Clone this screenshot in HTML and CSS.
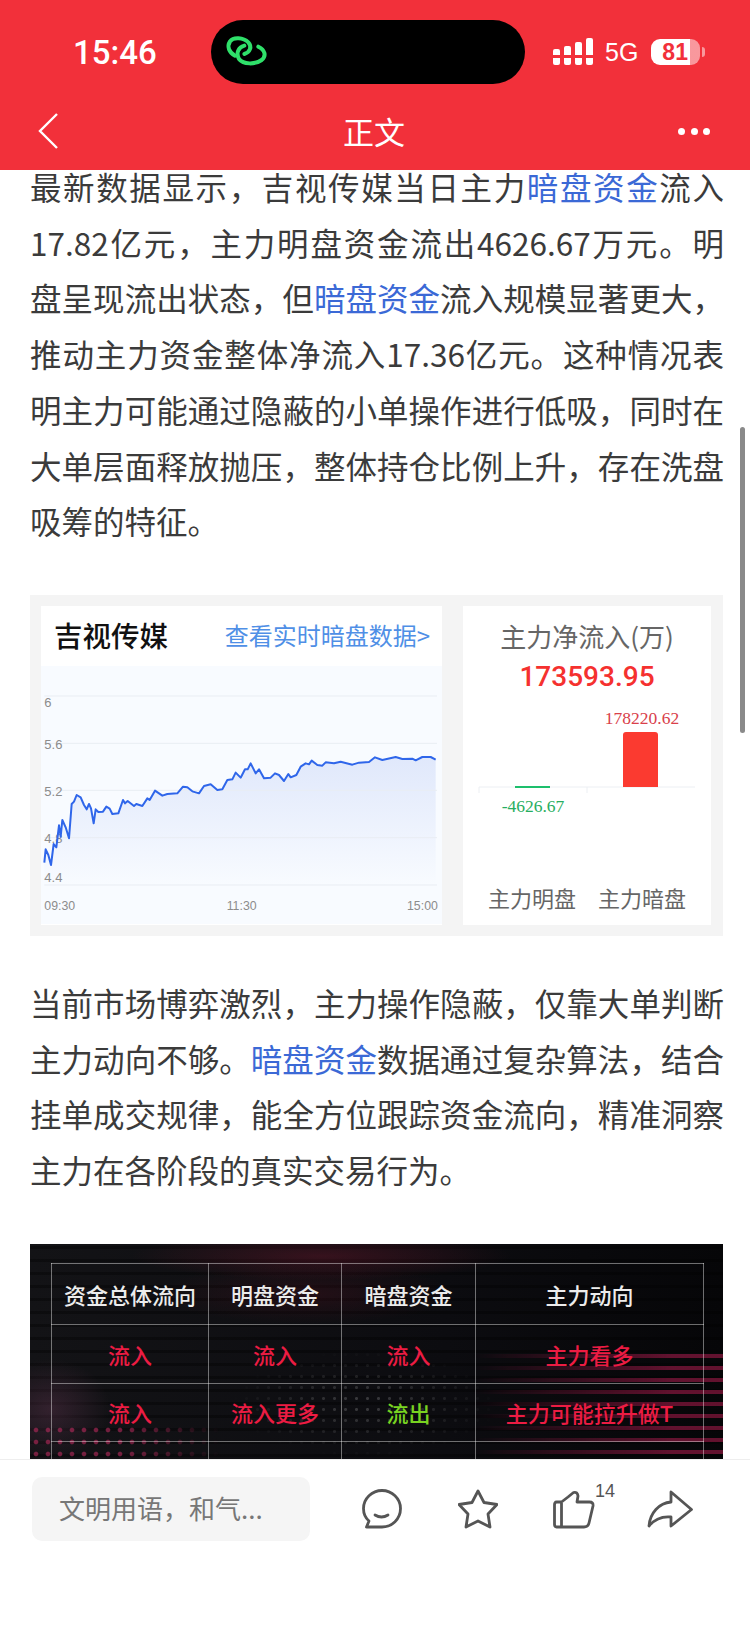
FILE: index.html
```html
<!DOCTYPE html>
<html lang="zh-CN">
<head>
    <meta charset="UTF-8">
    <title>正文</title>
    <link rel="stylesheet" href="styles.css">
</head>
<body>
<div class="page">
    <!--顶部红色区域-->
    <header class="top">
        <div class="status">
            <span class="time">15:46</span>
            <div class="island">
                <svg class="island-logo" width="70" height="55" viewBox="0 0 210 165">
                    <path d="M60 95 C42 85 35 68 45 52 C55 38 85 40 100 55 C112 68 105 85 88 90"/>
                    <path d="M88 65 C70 70 62 87 72 105 C85 122 120 122 140 108 C155 95 150 78 130 68"/>
                </svg>
            </div>
            <div class="signal">
                <i class="s1"></i><i class="s2"></i><i class="s3"></i><i class="s4"></i>
            </div>
            <span class="net">5G</span>
            <div class="battery"><span>81</span></div>
            <b class="battery-nub"></b>
        </div>
        <nav class="nav">
            <svg class="back" width="32" height="36" viewBox="0 0 32 36">
                <path d="M19 1 L2 18 L19 35"/>
            </svg>
            <span class="nav-title">正文</span>
            <div class="more"><i></i><i></i><i></i></div>
        </nav>
    </header>

    <!--正文-->
    <main class="content">
        <div class="article">
            <p>最新数据显示，吉视传媒当日主力<a class="link">暗盘资金</a>流入17.82亿元，主力明盘资金流出4626.67万元。明盘呈现流出状态，但<a class="link">暗盘资金</a>流入规模显著更大，推动主力资金整体净流入17.36亿元。这种情况表明主力可能通过隐蔽的小单操作进行低吸，同时在大单层面释放抛压，整体持仓比例上升，存在洗盘吸筹的特征。</p>

            <div class="stock-card">
                <div class="trend">
                    <div class="trend-head">
                        <span class="stock-name">吉视传媒</span>
                        <a class="stock-more">查看实时暗盘数据&gt;</a>
                    </div>
                    <svg class="trend-chart" width="401" height="258" viewBox="66 228 1203 774">
                        <defs>
                            <linearGradient id="areaFill" x1="0" y1="0" x2="0" y2="1">
                                <stop offset="0" stop-color="#e0e8fb"/>
                                <stop offset="1" stop-color="#f8fbff"/>
                            </linearGradient>
                        </defs>
                        <polygon class="area" points="76,885 76,818 80,778 88,795 96,825 104,762 112,772 120,706 125,740 130,690 140,712 150,745 158,642 165,635 173,615 185,622 195,645 203,658 210,642 216,655 224,700 230,658 238,666 252,665 262,650 272,656 280,672 298,670 312,630 318,640 326,633 345,648 352,642 370,648 385,625 392,630 408,602 430,617 445,612 475,610 492,590 505,592 520,604 540,610 555,588 575,583 595,600 610,598 625,570 640,568 650,548 665,563 678,538 686,538 695,520 710,550 720,538 735,565 755,563 768,550 780,555 795,573 808,552 815,562 832,555 845,530 860,520 870,523 878,512 895,525 910,527 920,517 945,520 965,515 1000,524 1020,518 1050,516 1068,502 1090,510 1130,501 1150,507 1180,506 1190,511 1210,501 1235,501 1250,509 1250,885"/>
                        <g class="grid">
                            <line x1="76" y1="318" x2="1254" y2="318"/>
                            <line x1="76" y1="460" x2="1254" y2="460"/>
                            <line x1="76" y1="601" x2="1254" y2="601"/>
                            <line x1="76" y1="743" x2="1254" y2="743"/>
                            <line x1="76" y1="885" x2="1254" y2="885"/>
                        </g>
                        <g class="axis">
                            <text x="76" y="352">6</text>
                            <text x="76" y="476">5.6</text>
                            <text x="76" y="618">5.2</text>
                            <text x="76" y="759">4.8</text>
                            <text x="76" y="877">4.4</text>
                        </g>
                        <g class="axis axis-time">
                            <text x="76" y="960">09:30</text>
                            <text x="623" y="960">11:30</text>
                            <text x="1164" y="960">15:00</text>
                        </g>
                        <polyline class="line" points="76,818 80,778 88,795 96,825 104,762 112,772 120,706 125,740 130,690 140,712 150,745 158,642 165,635 173,615 185,622 195,645 203,658 210,642 216,655 224,700 230,658 238,666 252,665 262,650 272,656 280,672 298,670 312,630 318,640 326,633 345,648 352,642 370,648 385,625 392,630 408,602 430,617 445,612 475,610 492,590 505,592 520,604 540,610 555,588 575,583 595,600 610,598 625,570 640,568 650,548 665,563 678,538 686,538 695,520 710,550 720,538 735,565 755,563 768,550 780,555 795,573 808,552 815,562 832,555 845,530 860,520 870,523 878,512 895,525 910,527 920,517 945,520 965,515 1000,524 1020,518 1050,516 1068,502 1090,510 1130,501 1150,507 1180,506 1190,511 1210,501 1235,501 1250,509"/>
                    </svg>
                </div>
                <div class="flow">
                    <div class="flow-title">主力净流入(万)</div>
                    <div class="flow-num">173593.95</div>
                    <svg class="flow-chart" width="248" height="130" viewBox="0 0 248 130">
                        <path class="flow-axis" d="M16 96V90H232M124 90V96"/>
                        <rect class="bar-green" x="52" y="89" width="35" height="2"/>
                        <path class="bar-red" d="M160 90V38Q160 35 163 35H192Q195 35 195 38V90Z"/>
                        <text class="val-red" x="179" y="27">178220.62</text>
                        <text class="val-green" x="70" y="115">-4626.67</text>
                    </svg>
                    <div class="flow-labels"><span>主力明盘</span><span>主力暗盘</span></div>
                </div>
            </div>

            <p>当前市场博弈激烈，主力操作隐蔽，仅靠大单判断主力动向不够。<a class="link">暗盘资金</a>数据通过复杂算法，结合挂单成交规律，能全方位跟踪资金流向，精准洞察主力在各阶段的真实交易行为。</p>

            <div class="dark-card">
                <div class="dots"></div>
                <table class="dark-table">
                    <tr class="head"><td>资金总体流向</td><td>明盘资金</td><td>暗盘资金</td><td>主力动向</td></tr>
                    <tr class="row-a"><td>流入</td><td>流入</td><td>流入</td><td>主力看多</td></tr>
                    <tr class="row-b"><td>流入</td><td>流入更多</td><td class="green">流出</td><td>主力可能拉升做T</td></tr>
                    <tr class="row-c"><td></td><td></td><td></td><td></td></tr>
                </table>
            </div>
        </div>
        <div class="scroll-thumb"></div>
    </main>

    <!--底部评论栏-->
    <footer class="bottom">
        <div class="comment-input">文明用语，和气...</div>
        <div class="actions">
            <div class="act">
                <svg width="40" height="40" viewBox="0 0 40 40">
                    <path d="M20 38 C30 38 38.5 30 38.5 19.5 C38.5 9.5 30 1.5 20 1.5 C10 1.5 1.5 9.5 1.5 19.5 C1.5 24.5 3.5 29 7 32 L4.5 38 H20Z"/>
                    <path d="M13 26 Q19.5 30 26 26"/>
                </svg>
            </div>
            <div class="act">
                <svg width="40" height="40" viewBox="0 0 40 40">
                    <path d="M20 2 L26 13.5 L39 15.5 L30 25 L32 38 L20 32 L8 38 L10 25 L1 15.5 L14 13.5Z"/>
                </svg>
            </div>
            <div class="act">
                <svg width="42" height="40" viewBox="0 0 42 40">
                    <path d="M8.5 13 H3.5 Q1.5 13 1.5 16 V35 Q1.5 38 3.5 38 H31 Q35 38 36 34 L40 17 Q40.5 13 36.5 13 H24 L25 7 Q24.5 2.5 20.5 3.5 L15 8 L8.5 13 V38"/>
                </svg>
                <span class="like-count">14</span>
            </div>
            <div class="act">
                <svg width="46" height="40" viewBox="0 0 46 40">
                    <path d="M24 3 L44.5 20.5 L24 37 V28 C14 27 7 31 2 37 C3 24 12 14 24 13 Z"/>
                </svg>
            </div>
        </div>
    </footer>
</div>
</body>
</html>
```

FILE: styles.css
```css
* {
    margin: 0;
    padding: 0;
    box-sizing: border-box;
}

body {
    background: #fff;
    font-family: "Noto Sans CJK SC", "Liberation Sans", sans-serif;
}

.page {
    width: 750px;
    height: 1626px;
    display: flex;
    flex-direction: column;
    overflow: hidden;
}

/* 顶部 */
.top {
    height: 170px;
    flex: none;
    background: #f2303a;
    color: #fff;
}

.status {
    height: 103px;
    display: flex;
    align-items: center;
    padding-left: 73px;
}

.time {
    width: 138px;
    font-family: Roboto, "Liberation Sans", sans-serif;
    font-size: 33px;
    font-weight: 500;
    margin-top: 1px;
}

.island {
    width: 314px;
    height: 64px;
    border-radius: 32px;
    background: #000;
    display: flex;
    align-items: center;
    padding-left: 4px;
}

.island-logo path {
    fill: none;
    stroke: #2fe06a;
    stroke-width: 12;
    stroke-linecap: round;
}

.signal {
    margin-left: 28px;
    display: flex;
    align-items: flex-end;
    gap: 4px;
    height: 27px;
}

.signal i {
    display: block;
    width: 7px;
    border-radius: 2px;
    background: linear-gradient(#fff, #fff) top/100% calc(100% - 10px) no-repeat,
                linear-gradient(#fff, #fff) bottom/100% 7px no-repeat;
}

.signal .s1 { height: 16px; }
.signal .s2 { height: 19px; }
.signal .s3 { height: 23px; }
.signal .s4 { height: 27px; }

.net {
    margin-left: 12px;
    font-family: "Liberation Sans", sans-serif;
    font-size: 25px;
    margin-top: 1px;
}

.battery {
    margin-left: 13px;
    width: 49px;
    height: 26px;
    border-radius: 9px;
    background: linear-gradient(90deg, #fff 80%, rgba(255, 255, 255, .5) 80%);
    color: #f2303a;
    font-family: "Liberation Sans", sans-serif;
    font-size: 23px;
    font-weight: bold;
    line-height: 26px;
    padding-left: 11px;
    margin-top: 1px;
}

.battery-nub {
    width: 3px;
    height: 10px;
    margin-left: 2px;
    margin-top: 1px;
    border-radius: 0 3px 3px 0;
    background: rgba(255, 255, 255, .5);
}

.nav {
    height: 56px;
    display: flex;
    align-items: center;
    padding: 0 40px 0 38px;
}

.back {
    flex: none;
}

.back path {
    fill: none;
    stroke: #fff;
    stroke-width: 2.4;
}

.nav-title {
    flex: 1;
    text-align: center;
    font-size: 31px;
    margin-bottom: 2px;
}

.more {
    width: 32px;
    display: flex;
    justify-content: space-between;
}

.more i {
    width: 7px;
    height: 7px;
    border-radius: 50%;
    background: #fff;
}

/* 正文 */
.content {
    flex: 1;
    min-height: 0;
    overflow: hidden;
    position: relative;
}

.article {
    margin-top: -11px;
    padding: 0 27px 0 30px;
}

.article p {
    margin-right: -1px;
    font-size: 31.5px;
    line-height: 55.7px;
    color: #3b3b3b;
    text-align: justify;
}

.article p .link {
    color: #3b69d6;
}

.stock-card {
    margin: 46px 0 39px;
    height: 341px;
    padding: 11px;
    background: #f4f4f4;
    display: flex;
    gap: 21px;
}

.trend {
    width: 401px;
    background: #fff;
}

.trend-head {
    height: 60px;
    display: flex;
    align-items: center;
    justify-content: space-between;
    padding: 0 12px 2px 13px;
}

.stock-name {
    font-size: 28.5px;
    font-weight: 500;
    color: #111;
}

.stock-more {
    font-size: 24px;
    color: #4f8fe6;
}

.trend-chart {
    display: block;
    background: #f8fbff;
}

.grid line {
    stroke: #e9edf3;
    stroke-width: 3;
}

.axis text {
    font-family: "Liberation Sans", sans-serif;
    font-size: 39px;
    fill: #8c8c8c;
}

.axis-time text {
    font-size: 37px;
}

.area {
    fill: url(#areaFill);
}

.line {
    fill: none;
    stroke: #2f66ea;
    stroke-width: 6;
    stroke-linejoin: round;
}

.flow {
    width: 248px;
    background: #fff;
    display: flex;
    flex-direction: column;
    align-items: center;
    padding: 14px 0 13px;
}

.flow-title {
    font-size: 26px;
    line-height: 32px;
    color: #666;
}

.flow-num {
    margin-top: 5px;
    font-family: Roboto, "Liberation Sans", sans-serif;
    font-size: 28px;
    font-weight: 500;
    line-height: 40px;
    color: #f5312f;
}

.flow-chart {
    display: block;
}

.flow-axis {
    fill: none;
    stroke: #eceff3;
    stroke-width: 1;
}

.bar-green {
    fill: #1dbf6c;
}

.bar-red {
    fill: #fb3a30;
}

.flow-chart text {
    font-family: "Liberation Serif", serif;
    font-size: 17.5px;
    text-anchor: middle;
}

.val-red {
    fill: #d9404a;
}

.val-green {
    fill: #27ae60;
}

.flow-labels {
    margin-top: auto;
    display: flex;
    gap: 22px;
    font-size: 22px;
    line-height: 30px;
    color: #666;
}

/* 深色表格 */
.dark-card {
    margin-top: 46px;
    height: 330px;
    padding: 19px 20px 0 21px;
    position: relative;
    overflow: hidden;
    background:
        radial-gradient(ellipse 190px 24px at 42% 12px, rgba(130, 25, 50, .35), transparent),
        radial-gradient(ellipse 150px 30px at 40% 50px, rgba(110, 20, 40, .22), transparent),
        radial-gradient(ellipse 60px 50px at 20px 165px, rgba(90, 50, 75, .45), transparent),
        repeating-linear-gradient(0deg, rgba(0, 0, 0, .35) 0 3px, transparent 3px 13px),
        linear-gradient(90deg, #131316, #0c0c10 60%, #060608);
}

/* 左下角粉色点阵 */
.dark-card::before {
    content: "";
    position: absolute;
    left: 0;
    bottom: 0;
    width: 190px;
    height: 150px;
    background: radial-gradient(circle, rgba(200, 45, 100, .55) 1.8px, transparent 2.8px) 0 0/12px 12px;
    -webkit-mask-image: linear-gradient(90deg, #000 50%, transparent);
    mask-image: linear-gradient(90deg, #000 50%, transparent);
}

/* 右下角粉色横条 */
.dark-card::after {
    content: "";
    position: absolute;
    right: 0;
    top: 104px;
    bottom: 0;
    width: 250px;
    background: repeating-linear-gradient(0deg, rgba(190, 30, 85, .5) 0 4px, transparent 4px 12px);
    -webkit-mask-image: linear-gradient(90deg, transparent, #000 80%);
    mask-image: linear-gradient(90deg, transparent, #000 80%);
}

.dots {
    position: absolute;
    left: 200px;
    top: 105px;
    width: 270px;
    height: 110px;
    background: radial-gradient(circle, rgba(255, 255, 255, .2) 1.2px, transparent 1.8px) 0 0/11px 11px;
    -webkit-mask-image: radial-gradient(ellipse closest-side, #000, transparent);
    mask-image: radial-gradient(ellipse closest-side, #000, transparent);
}

.dark-table {
    position: relative;
    z-index: 1;
    width: 653px;
    table-layout: fixed;
    border-collapse: collapse;
    text-align: center;
    font-size: 22px;
    font-weight: 500;
    color: #ec1c43;
}

.dark-table td {
    border: 1px solid rgba(255, 255, 255, .42);
}

.dark-table td:nth-child(1) { width: 157px; }
.dark-table td:nth-child(2) { width: 133px; }
.dark-table td:nth-child(3) { width: 134px; }

.dark-table .head { height: 61px; color: #ececec; }
.dark-table .row-a { height: 59px; }
.dark-table .row-b { height: 58px; }
.dark-table .row-c { height: 58px; }
.dark-table .green { color: #79d321; }

.scroll-thumb {
    position: absolute;
    right: 5px;
    top: 257px;
    width: 5px;
    height: 306px;
    border-radius: 3px;
    background: #8a8a8a;
}

/* 底部 */
.bottom {
    height: 167px;
    flex: none;
    background: #fff;
    border-top: 1px solid #eee;
    padding: 17px 0 0 32px;
    display: flex;
    align-items: flex-start;
}

.comment-input {
    width: 278px;
    height: 64px;
    border-radius: 10px;
    background: #f5f5f5;
    color: #777;
    font-size: 26px;
    line-height: 62px;
    padding-left: 27px;
}

.actions {
    margin-left: 24px;
    display: flex;
    height: 64px;
}

.act {
    width: 96px;
    display: flex;
    align-items: center;
    justify-content: center;
    position: relative;
}

.act path {
    fill: none;
    stroke: #555;
    stroke-width: 2.8;
    stroke-linejoin: round;
    stroke-linecap: round;
}

.like-count {
    position: absolute;
    left: 69px;
    top: 4px;
    font-family: "Liberation Sans", sans-serif;
    font-size: 18px;
    color: #555;
}
```
